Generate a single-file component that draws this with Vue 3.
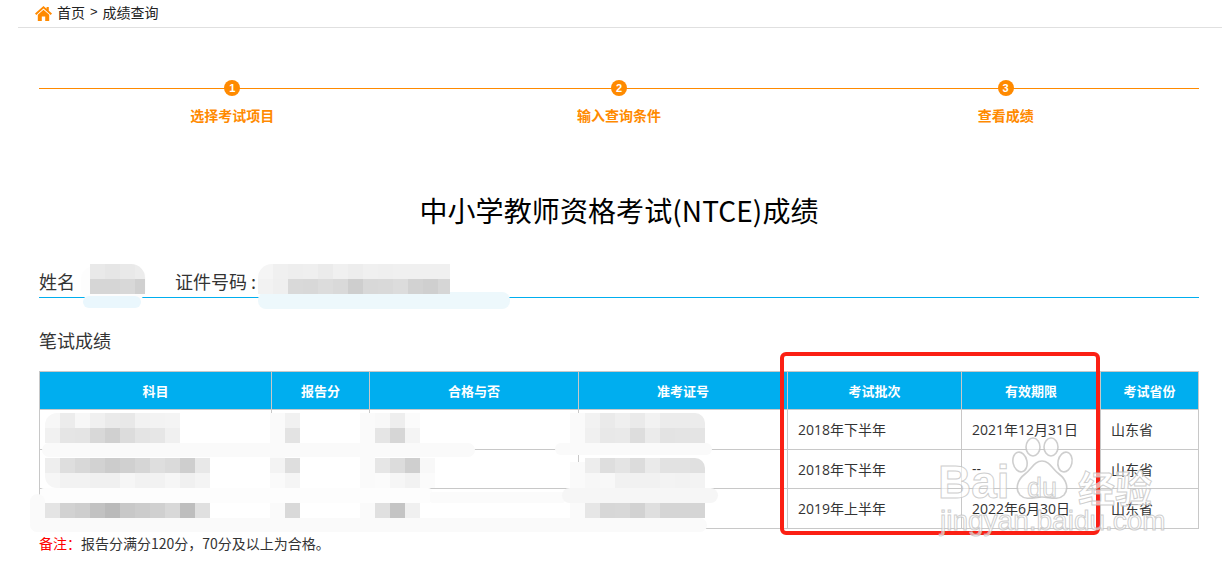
<script setup>
const steps = [
  { n: 1, label: '选择考试项目' },
  { n: 2, label: '输入查询条件' },
  { n: 3, label: '查看成绩' }
]
const heads = ['科目', '报告分', '合格与否', '准考证号', '考试批次', '有效期限', '考试省份']
const widths = [232, 98, 209, 209, 174, 139, 98]
const rows = [
  ['2018年下半年', '2021年12月31日', '山东省'],
  ['2018年下半年', '--', '山东省'],
  ['2019年上半年', '2022年6月30日', '山东省']
]
const smears = [
  { x: 81, y: 266, w: 65, h: 36, c: '#fdfdfd', r: 14 },
  { x: 83, y: 296, w: 58, h: 12, c: '#eaf7fd', r: 6 },
  { x: 258, y: 292, w: 252, h: 17, c: '#edf8fc', r: 8 },
  { x: 270, y: 413, w: 15, h: 75, c: '#fafafa', r: 0 },
  { x: 270, y: 493, w: 15, h: 39, c: '#fafafa', r: 0 },
  { x: 360, y: 413, w: 15, h: 75, c: '#fafafa', r: 0 },
  { x: 360, y: 493, w: 15, h: 39, c: '#fafafa', r: 0 },
  { x: 570, y: 413, w: 15, h: 41, c: '#fafafa', r: 0 },
  { x: 570, y: 462, w: 15, h: 70, c: '#fafafa', r: 0 },
  { x: 42, y: 443, w: 433, h: 14, c: '#fafafa', r: 7 },
  { x: 555, y: 443, w: 157, h: 12, c: '#fafafa', r: 6 },
  { x: 40, y: 488, w: 392, h: 15, c: '#fdfdfd', r: 4 },
  { x: 430, y: 492, w: 135, h: 11, c: '#fbfbfb', r: 3 },
  { x: 562, y: 488, w: 156, h: 15, c: '#f6f6f6', r: 8 },
  { x: 30, y: 518, w: 677, h: 14, c: '#fafafa', r: 7 },
  { x: 30, y: 494, w: 15, h: 36, c: '#fafafa', r: 8 }
]
const mosaics = [
  { x: 90, y: 264, w: 55, tr: 14, rows: [[233, 230, 233, 236], [214, 214, 216, 208]] },
  { x: 258, y: 264, w: 192, tl: 14, rows: [[245, 240, 238, 239, 235, 240, 237, 240, 239, 240, 240, 240, 240], [242, 239, 217, 216, 220, 217, 206, 216, 217, 220, 210, 207, 214]] },
  { x: 45, y: 413, tl: 12, rows: [[247, 236, 247, 240, 234, 232, 242, 243, 244], [241, 229, 228, 216, 208, 220, 228, 230, 240]] },
  { x: 285, y: 413, rows: [[241], [227]] },
  { x: 375, y: 413, rows: [[248, 238, 251], [229, 214, 244]] },
  { x: 585, y: 413, tr: 10, rows: [[242, 234, 239, 234, 242, 236, 236, 236], [240, 232, 233, 221, 235, 227, 228, 228]] },
  { x: 45, y: 458, bl: 12, rows: [[238, 222, 216, 210, 204, 208, 214, 222, 218, 206, 232], [246, 242, 242, 240, 240, 246, 242, 242, 246, 240, 244]] },
  { x: 270, y: 458, rows: [[243, 222], [250, 245]] },
  { x: 375, y: 458, rows: [[230, 220, 207, 248], [251, 246, 242, 251]] },
  { x: 585, y: 458, tr: 10, rows: [[237, 222, 228, 220, 234, 226, 226, 224], [247, 248, 241, 241, 241, 243, 242, 243]] },
  { x: 45, y: 503, rows: [[228, 210, 206, 194, 186, 200, 204, 208, 216, 190, 224]] },
  { x: 285, y: 503, rows: [[217]] },
  { x: 375, y: 503, rows: [[224, 196, 240]] },
  { x: 585, y: 503, rows: [[230, 215, 216, 210, 223, 213, 213, 213]] }
]
const boxStyle = s => ({ left: s.x + 'px', top: s.y + 'px', width: s.w + 'px', height: s.h + 'px', background: s.c, borderRadius: s.r + 'px' })
const posStyle = m => ({
  left: m.x + 'px',
  top: m.y + 'px',
  width: m.w ? m.w + 'px' : 'auto',
  borderRadius: `${m.tl || 0}px ${m.tr || 0}px 0 ${m.bl || 0}px`
})
const cellStyle = g => ({ background: `rgb(${g},${g},${g})` })
</script>

<template>
  <div class="page">
    <div class="crumb">
      <svg class="home" width="17" height="15" viewBox="0 0 17 15" aria-hidden="true">
        <path d="M8.5 0 L0 7.6 L1.3 8.9 L8.5 2.5 L15.7 8.9 L17 7.6 L13.8 4.8 V1 H11.6 V2.8 Z" fill="#ff8a00" />
        <path d="M8.5 3.8 L2.8 8.8 V15 H6.8 V10.4 H10.2 V15 H14.2 V8.8 Z" fill="#ff8a00" />
      </svg>
      <span>首页</span><span class="gt">&gt;</span><span>成绩查询</span>
    </div>

    <div class="main">
      <div class="steps">
        <div v-for="s in steps" :key="s.n" class="step">
          <span class="dot">{{ s.n }}</span>
          <span class="step-label">{{ s.label }}</span>
        </div>
      </div>

      <h1 class="title">中小学教师资格考试(NTCE)成绩</h1>

      <div class="info">
        <span class="name">姓名</span>
        <span>证件号码 :</span>
      </div>

      <h2 class="sub">笔试成绩</h2>

      <table class="grid">
        <colgroup>
          <col v-for="(w, i) in widths" :key="i" :style="{ width: w + 'px' }" />
        </colgroup>
        <thead>
          <tr><th v-for="h in heads" :key="h">{{ h }}</th></tr>
        </thead>
        <tbody>
          <tr v-for="(r, i) in rows" :key="i">
            <td></td><td></td><td></td><td></td>
            <td v-for="(c, j) in r" :key="j">{{ c }}</td>
          </tr>
        </tbody>
      </table>

      <p class="note"><span class="red">备注：</span>报告分满分120分，70分及以上为合格。</p>
    </div>

    <div v-for="(s, i) in smears" :key="'s' + i" class="smear" :style="boxStyle(s)"></div>
    <div v-for="(m, i) in mosaics" :key="'m' + i" class="mosaic" :style="posStyle(m)">
      <div v-for="(row, ri) in m.rows" :key="ri" class="mrow">
        <i v-for="(g, gi) in row" :key="gi" :style="cellStyle(g)"></i>
      </div>
    </div>

    <div class="redbox"></div>

    <div class="mark">
      <span class="bai">Bai</span>
      <svg class="paw" width="64" height="64" viewBox="0 0 64 64" aria-hidden="true">
        <g fill="rgba(255,255,255,.6)" stroke="rgba(190,190,190,.75)" stroke-width="1.6">
          <ellipse cx="9" cy="25" rx="7" ry="10" transform="rotate(-12 9 25)" />
          <ellipse cx="22" cy="10" rx="7" ry="9" />
          <ellipse cx="40" cy="10" rx="7" ry="9" />
          <ellipse cx="54" cy="25" rx="7" ry="10" transform="rotate(12 54 25)" />
          <path d="M31 24 C23 24 21 32 14 37 C6 43 4 52 9 58 C15 64 24 60 31 60 C38 60 47 64 53 58 C58 52 56 43 48 37 C41 32 39 24 31 24 Z" />
        </g>
      </svg>
      <span class="du">du</span>
      <span class="jy">经验</span>
      <span class="url">jingyan.baidu.com</span>
    </div>
  </div>
</template>

<style>
body { margin: 0; background: #fff; }
</style>

<style scoped>
.page {
  position: relative;
  width: 1222px;
  height: 566px;
  overflow: hidden;
  background: #fff;
  color: #333;
  font-family: "Noto Sans CJK SC", "Liberation Sans", sans-serif;
  font-size: 14px;
}
.crumb {
  margin-left: 18px;
  height: 28px;
  box-sizing: border-box;
  border-bottom: 1px solid #e0e0e0;
  padding: 0 0 3px 17px;
  display: flex;
  align-items: center;
  color: #222;
  font-size: 14px;
  line-height: 24px;
}
.home { margin-right: 5px; margin-top: 3px; }
.gt { margin: 0 5px; font-family: "Liberation Sans", sans-serif; font-size: 13px; }
.main { padding: 0 23px 0 39px; }
.steps {
  position: relative;
  display: flex;
  margin-top: 52px;
}
.steps::before {
  content: "";
  position: absolute;
  left: 0;
  right: 0;
  top: 8px;
  height: 1px;
  background: #ff8a00;
}
.step {
  flex: 1;
  display: flex;
  flex-direction: column;
  align-items: center;
  position: relative;
}
.dot {
  width: 16px;
  height: 16px;
  border-radius: 50%;
  background: #ff8a00;
  color: #fff;
  font: bold 11px/16px "Liberation Sans", sans-serif;
  text-align: center;
}
.step-label {
  margin-top: 9px;
  color: #ff8a00;
  font-size: 14px;
  font-weight: 700;
  line-height: 20px;
}
.title {
  margin: 65px 0 0;
  text-align: center;
  color: #000;
  font-size: 28px;
  font-weight: 400;
  line-height: 40px;
  letter-spacing: .1px;
}
.info {
  margin-top: 31px;
  height: 37px;
  box-sizing: border-box;
  border-bottom: 1px solid #00aeef;
  padding-top: 5px;
  display: flex;
  font-size: 18px;
  line-height: 30px;
  color: #333;
}
.name { width: 136px; }
.sub {
  margin: 28px 0 0;
  font-size: 18px;
  font-weight: 400;
  line-height: 28px;
  color: #333;
}
.grid {
  margin-top: 17px;
  width: 1159px;
  table-layout: fixed;
  border-collapse: collapse;
}
.grid th {
  height: 37px;
  padding: 0;
  background: #00aeef;
  border: 1px solid #c8c8c8;
  color: #fff;
  font-size: 13px;
  font-weight: 700;
  text-align: center;
}
.grid td {
  height: 38.5px;
  padding: 0 10px;
  border: 1px solid #c8c8c8;
  color: #333;
  font-family: "Open Sans", "Noto Sans CJK SC", sans-serif;
  font-size: 14px;
}
.note {
  margin: 4px 0 0;
  font-size: 14px;
  line-height: 20px;
  color: #333;
}
.red { color: #f00; }
.smear, .mosaic, .redbox, .mark, .mark > * { position: absolute; }
.mosaic { overflow: hidden; }
.mrow { display: flex; }
.mrow i { display: block; flex: none; width: 15px; height: 15px; }
.redbox {
  left: 780px;
  top: 352px;
  width: 320px;
  height: 183px;
  box-sizing: border-box;
  border: 4px solid #fb2014;
  border-radius: 6px;
}
.mark { left: 0; top: 0; width: 0; height: 0; font-family: "Liberation Sans", sans-serif; font-weight: 700; color: rgba(255,255,255,.6); -webkit-text-stroke: 1px rgba(190,190,190,.75); }
.bai { left: 938px; top: 459px; font-size: 46px; line-height: 46px; }
.paw { left: 1011px; top: 437px; }
.du { left: 1027px; top: 473px; font-size: 27px; line-height: 30px; font-weight: 400; }
.jy { left: 1078px; top: 465px; width: 80px; font-family: "Noto Sans CJK SC", sans-serif; font-size: 37px; line-height: 44px; }
.url { left: 940px; top: 505px; font-size: 28px; line-height: 32px; font-weight: 400; white-space: nowrap; }
</style>
